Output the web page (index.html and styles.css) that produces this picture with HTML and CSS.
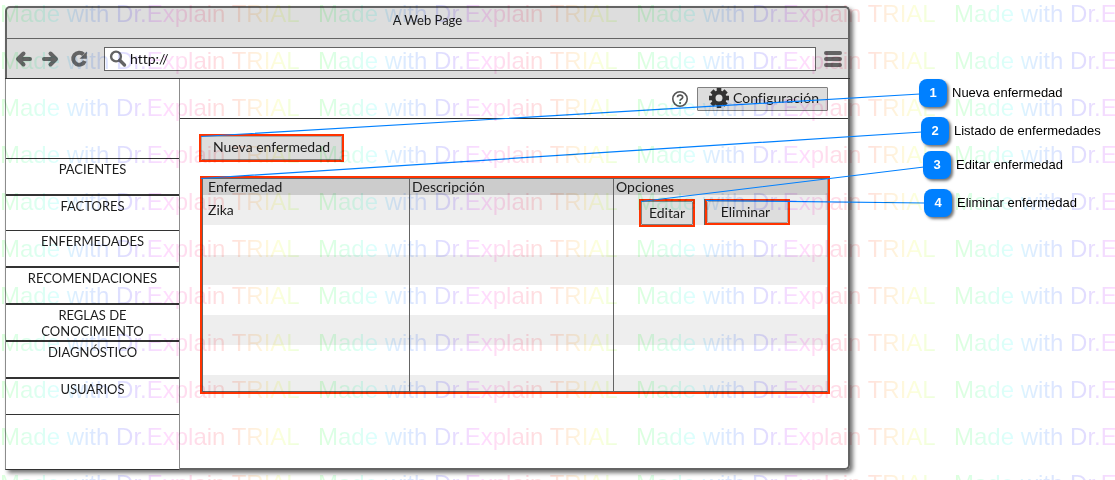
FILE: index.html
```html
<!DOCTYPE html>
<html lang="es">
<head>
<meta charset="utf-8">
<title>Enfermedades</title>
<link rel="stylesheet" href="styles.css">
</head>
<body>
<div class="stage">
  <section class="window">
    <header class="chrome">
      <div class="titlebar">A Web Page</div>
      <div class="toolbar">
        <button class="tool" aria-label="Atrás"><svg width="18" height="18" viewBox="0 0 18 18"><path d="M15 9H4M8.500 3.500L3 9l5.500 5.500" class="thick"/></svg></button>
        <button class="tool" aria-label="Adelante"><svg width="18" height="18" viewBox="0 0 18 18"><path d="M3 9H14M9.500 3.500L15 9l-5.500 5.500" class="thick"/></svg></button>
        <button class="tool reload" aria-label="Recargar"><svg width="18" height="18" viewBox="0 0 18 18"><path d="M13.500 4.500A6 6 0 1 0 14.800 11" class="arc"/><path d="M16.800 1.500v7.300H9.500z" fill="#646464"/></svg></button>
        <label class="address">
          <svg width="18" height="18" viewBox="0 0 18 18"><circle cx="7" cy="6.500" r="4.900" fill="none" stroke="#646464" stroke-width="2.400"/><path d="M10.800 10.300l4.700 4.700" stroke="#646464" stroke-width="3.400" stroke-linecap="round"/></svg>
          <input type="text" value="http://" aria-label="Dirección">
        </label>
        <button class="tool" aria-label="Menú"><svg width="18" height="18" viewBox="0 0 18 18"><path d="M2 3h14M2 9h14M2 15h14" class="bars"/></svg></button>
      </div>
    </header>
    <div class="page">
      <nav class="sidebar">
        <span></span>
        <a class="thin" href="#pacientes">PACIENTES</a>
        <a href="#factores">FACTORES</a>
        <a class="thin" href="#enfermedades">ENFERMEDADES</a>
        <a href="#recomendaciones">RECOMENDACIONES</a>
        <a href="#reglas">REGLAS DE<br>CONOCIMIENTO</a>
        <a href="#diagnostico">DIAGNÓSTICO</a>
        <a href="#usuarios">USUARIOS</a>
        <div class="rest"></div>
      </nav>
      <main class="main">
        <div class="topbar">
          <button class="help" aria-label="Ayuda"><svg width="18" height="18" viewBox="0 0 18 18"><circle cx="9" cy="9" r="7.200" fill="none" stroke="#555" stroke-width="1.600"/><path d="M6.500 7.300C6.500 4.300 11.700 4.300 11.700 7.200C11.700 9 9.100 8.900 9.100 10.800" fill="none" stroke="#555" stroke-width="1.700"/><circle cx="9.100" cy="13" r="1.100" fill="#555"/></svg></button>
          <button class="btn config"><svg width="22" height="22" viewBox="-11 -11 22 22"><g fill="#333"><path id="tooth" d="M-2.300-10h4.600v4h-4.600z"/><use href="#tooth" transform="rotate(45)"/><use href="#tooth" transform="rotate(90)"/><use href="#tooth" transform="rotate(135)"/><use href="#tooth" transform="rotate(180)"/><use href="#tooth" transform="rotate(225)"/><use href="#tooth" transform="rotate(270)"/><use href="#tooth" transform="rotate(315)"/></g><circle r="5.500" fill="none" stroke="#333" stroke-width="4"/></svg>Configuración</button>
        </div>
        <div class="content">
          <div class="marked new"><button class="btn">Nueva enfermedad</button></div>
          <div class="marked frame">
            <table class="list">
              <colgroup><col class="c1"><col class="c2"><col></colgroup>
              <thead><tr><th>Enfermedad</th><th>Descripción</th><th>Opciones</th></tr></thead>
              <tbody>
                <tr><td>Zika</td><td></td><td><div class="actions"><span class="marked edit"><button class="btn">Editar</button></span><span class="marked remove"><button class="btn">Eliminar</button></span></div></td></tr>
                <tr><td></td><td></td><td></td></tr>
                <tr><td></td><td></td><td></td></tr>
                <tr><td></td><td></td><td></td></tr>
                <tr><td></td><td></td><td></td></tr>
                <tr><td></td><td></td><td></td></tr>
                <tr class="cut"><td></td><td></td><td></td></tr>
              </tbody>
            </table>
          </div>
        </div>
      </main>
    </div>
  </section>
  <svg class="connectors" width="1115" height="480" viewBox="0 0 1115 480"><path d="M201 136.500L920 94M201 178.500L922 132M641 201.500L924 167M706 200.500L925 203"/></svg>
  <div class="callout one"><b>1</b>Nueva enfermedad</div>
  <div class="callout two"><b>2</b>Listado de enfermedades</div>
  <div class="callout three"><b>3</b>Editar enfermedad</div>
  <div class="callout four"><b>4</b>Eliminar enfermedad</div>
  <div class="watermark" id="watermark"></div>
</div>
<script src="watermark.js"></script>
</body>
</html>
```
FILE: styles.css
```css
* { box-sizing: border-box; }
body {
  margin: 0;
  background: #fff;
  color: #1c1c1c;
  font: 14px/16px Lato, "Open Sans", sans-serif;
  font-variant-ligatures: none;
}
button { font: inherit; color: inherit; }
.stage {
  position: relative;
  min-height: 100vh;
  padding: 6px 265px 10px 5px;
  overflow: hidden;
}
.window {
  border-radius: 5px 5px 5px 0;
  box-shadow: 3px 3px 4px rgba(0, 0, 0, .55);
  background: #fff;
}
.chrome {
  background: #ddd;
  border: 2px solid #646464;
  border-bottom: 0;
  border-radius: 5px 5px 0 0;
}
.titlebar {
  height: 31px;
  padding-top: 4px;
  border-bottom: 1px solid #646464;
  text-align: center;
  font-size: 13px;
}
.toolbar {
  display: flex;
  align-items: center;
  height: 39px;
  padding: 0 6px 0 8px;
  gap: 8px;
}
.tool, .help {
  display: flex;
  padding: 0;
  border: 0;
  background: none;
}
.reload { margin: 0 8px 0 3px; }
.thick { fill: none; stroke: #646464; stroke-width: 4; stroke-linecap: round; stroke-linejoin: round; }
.arc { fill: none; stroke: #646464; stroke-width: 4; }
.bars { stroke: #646464; stroke-width: 4; stroke-linecap: round; }
.address {
  display: flex;
  flex: 1;
  align-items: center;
  height: 24px;
  padding-left: 4px;
  gap: 3px;
  border: 1px solid #646464;
  background: #fff;
}
.address input {
  flex: 1;
  min-width: 0;
  padding: 0;
  border: 0;
  outline: 0;
  background: none;
  color: #111;
  font: inherit;
  font-variant-ligatures: none;
}
.page { display: flex; border-top: 1px solid #333; }
.sidebar {
  display: grid;
  flex: 0 0 175px;
  grid-template-rows: 79px repeat(3, 36px) repeat(4, 37px) 1fr;
  border: solid #8c8c8c;
  border-width: 0 1px;
  border-bottom: 1px solid #333;
  font-size: 13px;
}
.sidebar a {
  padding-top: 2px;
  border-top: 2px solid #333;
  color: #1c1c1c;
  text-align: center;
  text-decoration: none;
}
.sidebar a.thin, .rest { border-top: 1px solid #333; }
.main {
  flex: 1;
  min-width: 0;
  border: solid #646464;
  border-width: 0 2px 2px 0;
  border-radius: 0 0 5px 0;
}
.topbar {
  display: flex;
  align-items: center;
  justify-content: flex-end;
  height: 40px;
  padding-right: 20px;
  gap: 8px;
  border-bottom: 1px solid #333;
}
.btn {
  display: flex;
  align-items: center;
  justify-content: center;
  width: 100%;
  height: 100%;
  padding: 0;
  border: 1px solid #808080;
  border-radius: 1px;
  background: #ddd;
}
.config { width: 131px; height: 24px; padding: 0 0 2px 2px; gap: 3px; }
.content { padding: 15px 18px 74px 19px; }
.marked { display: block; border: 2px solid #f30; }
.new { width: 145px; height: 28px; margin-bottom: 14px; }
.new .btn { padding-bottom: 2px; border-color: #aaa #aaa #808080; }
.frame { margin-left: 1px; }
.list {
  width: 100%;
  border: 1px solid #646464;
  border-right-color: #999;
  border-collapse: separate;
  border-spacing: 0;
  table-layout: fixed;
}
.c1 { width: 206px; }
.c2 { width: 204px; }
.list th {
  height: 16px;
  padding: 0 2px;
  background: #ccc;
  font-weight: 400;
  text-align: left;
}
.list td { height: 30px; padding: 0 2px; }
.list th + th, .list td + td { border-left: 1px solid #646464; }
.list th:first-child, .list td:first-child { padding-left: 5px; }
.list tbody tr:nth-child(odd) { background: #eee; }
.list .cut td { height: 16px; }
.actions { display: flex; height: 30px; padding: 4px 0 0 23px; gap: 10px; }
.edit { width: 56px; height: 28px; }
.remove { width: 85px; height: 26px; box-shadow: -1px 0 #646464; }
.remove .btn { padding-right: 4px; border-color: #aaa; }
.connectors { position: absolute; top: 0; left: 0; fill: none; stroke: #0080ff; stroke-width: 1.200; }
.callout {
  position: absolute;
  z-index: 1;
  display: flex;
  align-items: center;
  gap: 5px;
  color: #000;
  font: 13px/16px "Liberation Sans", Arial, sans-serif;
  white-space: nowrap;
}
.callout b {
  width: 28px;
  height: 28px;
  border-radius: 8px;
  background: #0080ff;
  box-shadow: 2px 2px 3px rgba(0, 0, 0, .55);
  color: #fff;
  line-height: 28px;
  text-align: center;
}
.one { top: 79px; left: 919px; }
.two { top: 117px; left: 921px; }
.three { top: 151px; left: 923px; }
.four { top: 189px; left: 924px; }
.watermark {
  position: absolute;
  top: 0;
  left: 0;
  display: grid;
  grid-template-columns: repeat(4, 318px);
  grid-auto-rows: 47px;
  mix-blend-mode: multiply;
  pointer-events: none;
}
.watermark span {
  justify-self: start;
  background: linear-gradient(90deg, #dcffdc 0%, #dcfff0 12%, #dcffff 20%, #dceeff 25%, #dce2ff 37%, #e2dcff 44%, #f6dcff 51%, #ffdcff 55%, #ffdcf0 61%, #ffdce2 70%, #ffe0dc 77%, #ffeadc 82%, #fff6dc 88%, #fcffdc 93%, #ecffdc 100%);
  background-clip: text;
  color: transparent;
  font: 24px/28px "Liberation Sans", Arial, sans-serif;
  white-space: nowrap;
}
```
FILE: watermark.js
```js
const layer = document.getElementById("watermark");
for (let i = 0; i < 44; i++) {
  const mark = document.createElement("span");
  mark.textContent = "Made with Dr.Explain TRIAL";
  layer.append(mark);
}
```
